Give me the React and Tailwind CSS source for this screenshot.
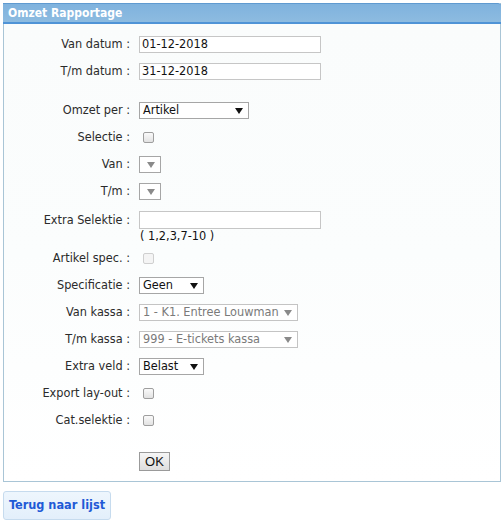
import React from "react";

const font = "font-['DejaVu_Sans_Condensed','DejaVu_Sans',sans-serif]";

function Arrow({ gray }) {
  return (
    <svg width="8" height="6" viewBox="0 0 8 6" className="shrink-0">
      <polygon points="0,0 8,0 4,6" fill={gray ? "#8a8a8a" : "#111"} />
    </svg>
  );
}

function Select({ value, w, disabled }) {
  return (
    <div
      className={`flex items-center justify-between h-[17px] pl-[3px] pr-[5px] border bg-white text-[12.6px] leading-none ${w} ${
        disabled ? "border-[#c4c4c4] text-[#7a7a7a]" : "border-[#a6a6a6] text-[#111]"
      }`}
    >
      <span className="whitespace-nowrap">{value}</span>
      <Arrow gray={disabled || !value} />
    </div>
  );
}

function Checkbox({ disabled }) {
  return (
    <div
      className={`ml-[4px] w-[11px] h-[11px] rounded-[2px] border ${
        disabled ? "border-[#cfcfcf] bg-[#f4f4f4]" : "border-[#9e9e9e] bg-gradient-to-b from-[#fafafa] to-[#e2e2e2]"
      }`}
    />
  );
}

function Input({ value }) {
  return (
    <div className="w-[182px] h-[17px] border border-[#c6c6c6] bg-white pl-[2px] flex items-center text-[12.6px] text-[#111] leading-none">
      {value}
    </div>
  );
}

function Row({ label, children, h = "h-[27px]" }) {
  return (
    <div className={`flex items-center ${h}`}>
      <div className="w-[127px] text-right pr-[1px] text-[12.6px] text-[#2b2b2b] whitespace-nowrap">{label} :</div>
      <div className="pl-[8px] flex items-center">{children}</div>
    </div>
  );
}

export default function App() {
  return (
    <div className={`${font} bg-white w-[504px] h-[526px] pt-[3px] pl-[3px]`}>
      <div className="w-[498px] border border-[#a9c5d6] border-t-0">
        <div className="h-[21px] -mx-px bg-gradient-to-b from-[#7fb2de] to-[#8dbbe0] border-t border-[#5f9ad0] border-b-2 border-b-[#4f93d6] rounded-tr-[3px] flex items-center pl-[5px]">
          <span className="text-white font-bold text-[12px] leading-none">Omzet Rapportage</span>
        </div>
        <div className="bg-gradient-to-b from-[#fafcfc] via-[#fbfdfd] to-white pt-[7px] pb-[10px]">
          <Row label="Van datum">
            <Input value="01-12-2018" />
          </Row>
          <Row label="T/m datum">
            <Input value="31-12-2018" />
          </Row>
          <div className="h-[12px]" />
          <Row label="Omzet per">
            <Select value="Artikel" w="w-[110px]" />
          </Row>
          <Row label="Selectie">
            <Checkbox />
          </Row>
          <Row label="Van">
            <Select value="" w="w-[22px]" />
          </Row>
          <Row label="T/m">
            <Select value="" w="w-[22px]" />
          </Row>
          <div className="flex h-[40px] pt-[6px]">
            <div className="w-[127px] text-right pr-[1px] text-[12.6px] text-[#2b2b2b] h-[18px] flex items-center justify-end whitespace-nowrap">Extra Selektie :</div>
            <div className="pl-[8px] flex flex-col">
              <div className="w-[182px] h-[18px] border border-[#c6c6c6] bg-white" />
              <div className="text-[12.6px] text-[#111] leading-none mt-[1px] pl-[1px]">( 1,2,3,7-10 )</div>
            </div>
          </div>
          <Row label="Artikel spec.">
            <Checkbox disabled />
          </Row>
          <Row label="Specificatie">
            <Select value="Geen" w="w-[65px]" />
          </Row>
          <Row label="Van kassa">
            <Select value="1 - K1. Entree Louwman" w="w-[159px]" disabled />
          </Row>
          <Row label="T/m kassa">
            <Select value="999 - E-tickets kassa" w="w-[159px]" disabled />
          </Row>
          <Row label="Extra veld">
            <Select value="Belast" w="w-[65px]" />
          </Row>
          <Row label="Export lay-out">
            <Checkbox />
          </Row>
          <Row label="Cat.selektie">
            <Checkbox />
          </Row>
          <div className="pl-[135px] pt-[18px]">
            <button className="w-[31px] h-[19px] border border-[#9a9a9a] bg-gradient-to-b from-[#f6f6f6] to-[#dedede] text-[13px] text-[#111] font-['Liberation_Sans',sans-serif] leading-none flex items-center justify-center">
              OK
            </button>
          </div>
        </div>
      </div>
      <div className="mt-[9px] w-[108px] h-[29px] rounded-[3px] border border-[#c6dbee] bg-gradient-to-b from-[#eef6fd] to-[#e3effb] flex items-center justify-center">
        <span className="text-[12.6px] font-bold text-[#1f5ad6]">Terug naar lijst</span>
      </div>
    </div>
  );
}
